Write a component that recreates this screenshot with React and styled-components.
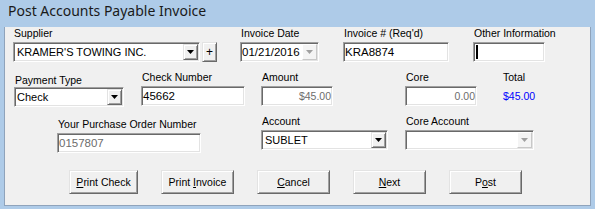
import React from "react";
import styled, { createGlobalStyle, css } from "styled-components";

const GlobalStyle = createGlobalStyle`
  html, body {
    margin: 0;
    background: #aecbe8;
  }
  body {
    font-family: "Liberation Sans", Arial, sans-serif;
    color: #000;
  }
`;

const sunken = css`
  border: 1px solid;
  border-color: #a0a0a0 #ffffff #ffffff #a0a0a0;
  box-shadow: inset 1px 1px #696969, inset -1px -1px #e3e3e3;
`;

const raised = css`
  border: 1px solid;
  border-color: #e3e3e3 #696969 #696969 #e3e3e3;
  box-shadow: inset 1px 1px #ffffff, inset -1px -1px #a0a0a0;
  background: #f0f0f0;
`;

const Window = styled.div`
  width: 595px;
  height: 209px;
  box-sizing: border-box;
  padding: 0 4px;
  background: #aecbe8;
`;

const TitleBar = styled.div`
  height: 25px;
  padding-left: 4px;
  font-family: "Noto Sans", "Open Sans", sans-serif;
  font-size: 14px;
  line-height: 22px;
  color: #1a1a1a;
  white-space: nowrap;
`;

const Client = styled.div`
  background: #f0f0f0;
  border: 1px solid #8fa3bb;
  border-top: none;
  padding: 0 0 11px 8px;
`;

const Row = styled.div`
  display: flex;
  align-items: flex-start;
  margin-top: ${(p) => p.$mt || 0}px;
`;

const Field = styled.div`
  display: flex;
  flex-direction: column;
  flex-shrink: 0;
  width: ${(p) => p.$w}px;
  margin-left: ${(p) => p.$ml || 0}px;
  margin-top: ${(p) => p.$mt || 0}px;
`;

const Label = styled.div`
  font-size: 10.5px;
  line-height: 13px;
  height: 13px;
  padding-left: 1px;
  margin-bottom: ${(p) => (p.$gap === undefined ? 2 : p.$gap)}px;
  white-space: nowrap;
`;

const TextBox = styled.div`
  box-sizing: border-box;
  height: 20px;
  ${sunken};
  background: #fff;
  font-size: ${(p) => p.$fs || 11.5}px;
  line-height: 18px;
  padding: 0 ${(p) => (p.$right ? 1 : 0)}px 0 1px;
  text-align: ${(p) => (p.$right ? "right" : "left")};
  color: ${(p) => (p.$muted ? "#6d6d6d" : "#000")};
  white-space: nowrap;
  overflow: hidden;
  display: flex;
  align-items: center;
  justify-content: ${(p) => (p.$right ? "flex-end" : "flex-start")};
`;

const Caret = styled.span`
  display: inline-block;
  width: 2px;
  height: 14px;
  background: #000;
  margin-left: 1px;
`;

const Combo = styled.div`
  box-sizing: border-box;
  display: flex;
  align-items: center;
  height: 20px;
  ${sunken};
  background: #fff;
  padding: 1px 1px 1px 0;
`;

const ComboText = styled.div`
  flex: 1;
  font-size: ${(p) => p.$fs || 11}px;
  line-height: 16px;
  padding-left: ${(p) => (p.$pl === undefined ? 3 : p.$pl)}px;
  white-space: nowrap;
  overflow: hidden;
`;

const DropButton = styled.div`
  box-sizing: border-box;
  width: 15px;
  height: 16px;
  display: flex;
  align-items: center;
  justify-content: center;
  ${raised};
  ${(p) =>
    p.$disabled &&
    css`
      border-color: #ffffff #c8c8c8 #c8c8c8 #ffffff;
      box-shadow: none;
      background: #f4f4f4;
    `}
`;

const PlusButton = styled.div`
  box-sizing: border-box;
  width: 15px;
  height: 20px;
  margin-left: 2px;
  ${raised};
  display: flex;
  align-items: center;
  justify-content: center;
  font-size: 12px;
  line-height: 1;
`;

const SupplierLine = styled.div`
  display: flex;
  align-items: center;
`;

const TotalValue = styled.div`
  height: 20px;
  line-height: 20px;
  font-size: 10.5px;
  color: #0000ff;
  padding-left: 1px;
`;

const ButtonRow = styled.div`
  display: flex;
  gap: 23px;
  margin-top: 17px;
  padding-left: 56px;
`;

const Button = styled.div`
  box-sizing: border-box;
  width: ${(p) => p.$w || 73}px;
  height: 24px;
  ${raised};
  display: flex;
  align-items: center;
  justify-content: center;
  font-size: 10.5px;
  white-space: nowrap;
`;

function Arrow({ disabled }) {
  return (
    <DropButton $disabled={disabled}>
      <svg width="7" height="4" viewBox="0 0 7 4">
        <path d="M0 0h7L3.5 4z" fill={disabled ? "#a0a0a0" : "#000"} />
      </svg>
    </DropButton>
  );
}

export default function App() {
  return (
    <>
      <GlobalStyle />
      <Window>
        <TitleBar>Post Accounts Payable Invoice</TitleBar>
        <Client>
          <Row $mt={2}>
            <Field $w={204}>
              <Label>Supplier</Label>
              <SupplierLine>
                <Combo style={{ width: 187 }}>
                  <ComboText $pl={3}>KRAMER'S TOWING INC.</ComboText>
                  <Arrow />
                </Combo>
                <PlusButton>+</PlusButton>
              </SupplierLine>
            </Field>
            <Field $w={79} $ml={23}>
              <Label>Invoice Date</Label>
              <Combo>
                <ComboText $pl={1} $fs={11.5}>01/21/2016</ComboText>
                <Arrow disabled />
              </Combo>
            </Field>
            <Field $w={106} $ml={24}>
              <Label>Invoice # (Req'd)</Label>
              <TextBox>KRA8874</TextBox>
            </Field>
            <Field $w={72} $ml={24}>
              <Label>Other Information</Label>
              <TextBox>
                <Caret />
              </TextBox>
            </Field>
          </Row>

          <Row $mt={9}>
            <Field $w={110} $ml={1} $mt={3}>
              <Label $gap={0}>Payment Type</Label>
              <Combo>
                <ComboText $pl={2}>Check</ComboText>
                <Arrow />
              </Combo>
            </Field>
            <Field $w={104} $ml={17}>
              <Label>Check Number</Label>
              <TextBox>45662</TextBox>
            </Field>
            <Field $w={72} $ml={16}>
              <Label>Amount</Label>
              <TextBox $right $muted $fs={10.5}>
                $45.00
              </TextBox>
            </Field>
            <Field $w={72} $ml={72}>
              <Label>Core</Label>
              <TextBox $right $muted $fs={10.5}>
                0.00
              </TextBox>
            </Field>
            <Field $w={60} $ml={25}>
              <Label>Total</Label>
              <TotalValue>$45.00</TotalValue>
            </Field>
          </Row>

          <Row>
            <Field $w={144} $ml={44} $mt={11}>
              <Label>Your Purchase Order Number</Label>
              <TextBox $muted>0157807</TextBox>
            </Field>
            <Field $w={127} $ml={60} $mt={8}>
              <Label>Account</Label>
              <Combo>
                <ComboText $pl={3}>SUBLET</ComboText>
                <Arrow />
              </Combo>
            </Field>
            <Field $w={129} $ml={17} $mt={8}>
              <Label>Core Account</Label>
              <Combo>
                <ComboText />
                <Arrow disabled />
              </Combo>
            </Field>
          </Row>

          <ButtonRow>
            <Button $w={69}>
              <span>
                <u>P</u>rint Check
              </span>
            </Button>
            <Button $w={73}>
              <span>
                Print <u>I</u>nvoice
              </span>
            </Button>
            <Button>
              <span>
                <u>C</u>ancel
              </span>
            </Button>
            <Button>
              <span>
                <u>N</u>ext
              </span>
            </Button>
            <Button>
              <span>
                P<u>o</u>st
              </span>
            </Button>
          </ButtonRow>
        </Client>
      </Window>
    </>
  );
}
